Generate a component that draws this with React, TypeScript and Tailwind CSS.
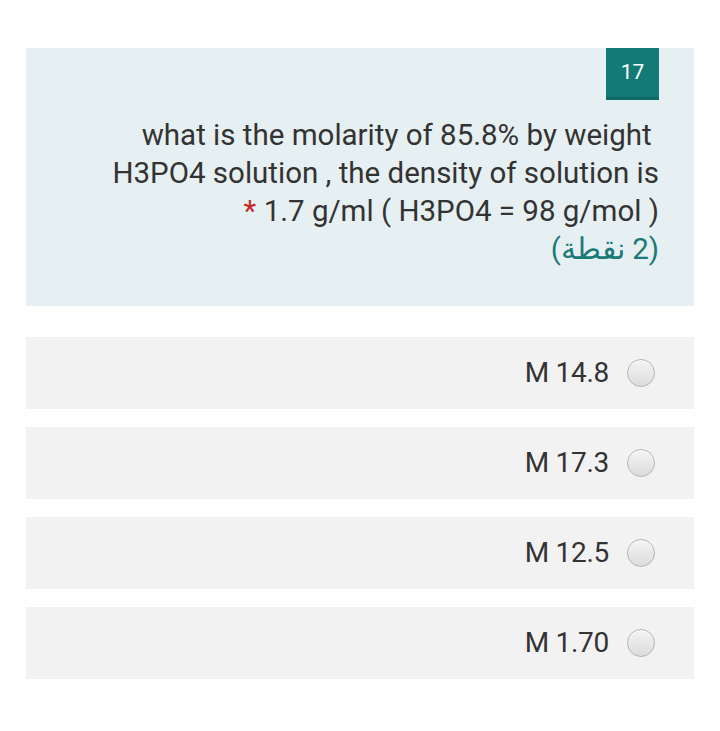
import React from "react";

const options = ["M 14.8", "M 17.3", "M 12.5", "M 1.70"];

function Radio() {
  return (
    <span className="block w-[28px] h-[28px] rounded-full border border-[#b5b5b5] bg-gradient-to-b from-[#f4f4f4] to-[#dcdcdc] shadow-[inset_0_1px_1px_rgba(255,255,255,0.8)]" />
  );
}

export default function App() {
  return (
    <div
      className="w-[720px] h-[731px] bg-white pt-[48px] px-[26px] text-[#333333]"
      style={{ fontFamily: "Roboto, 'Noto Sans', sans-serif" }}
    >
      <div className="bg-[#e6eff1] pr-[35px] pb-[38px] flex flex-col items-end">
        <div className="w-[53px] h-[52px] bg-[#137a78] text-white text-[21px] flex items-center justify-center border-b-[3px] border-[#0f6a68]">
          17
        </div>
        <div className="mt-[16px] text-right text-[29.5px] leading-[38px]">
          <div>what is the molarity of 85.8% by weight&nbsp;</div>
          <div>H3PO4 solution , the density of solution is</div>
          <div>
            <span className="text-[#c62828]">*</span> 1.7 g/ml ( H3PO4 = 98 g/mol )
          </div>
          <div dir="rtl" className="text-[#1a7a78]">
            (2 نقطة)
          </div>
        </div>
      </div>
      <div className="mt-[31px] flex flex-col gap-[18px]">
        {options.map((o) => (
          <div
            key={o}
            className="h-[72px] bg-[#f2f2f2] flex items-center justify-end pr-[39px] gap-[18px]"
          >
            <span className="text-[28px] tracking-[-0.3px]">{o}</span>
            <Radio />
          </div>
        ))}
      </div>
    </div>
  );
}
